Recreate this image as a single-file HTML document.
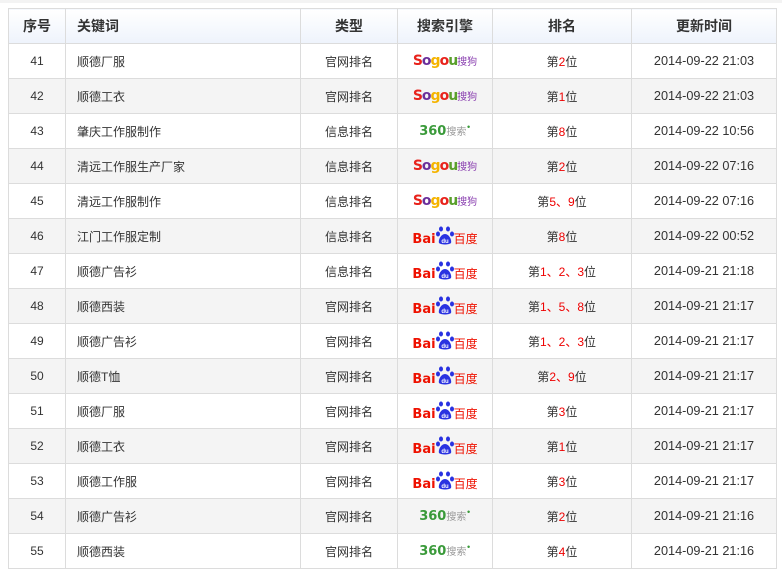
<!DOCTYPE html>
<html><head><meta charset="utf-8"><style>
body{margin:0;background:#fff;font-family:"Liberation Sans","Noto Sans CJK SC",sans-serif;font-size:12px;color:#333;overflow:hidden;width:782px;height:569px}
.top{position:absolute;left:0;top:0;width:782px;height:3px;background:#f3f3f3}
table{position:absolute;left:8px;top:8px;border-collapse:collapse;table-layout:fixed;width:768px}
td,th{border:1px solid #dcdcdc;height:34px;padding:0;text-align:center;white-space:nowrap}
th{font-size:14px;font-weight:bold;color:#333;background:linear-gradient(#fff,#eef3fc);}
tr.e td{background:#f4f4f4}
.k{text-align:left;padding-left:11px}
.t{font-size:12.7px}
.r{color:#e00}
.sg{font-weight:bold;font-size:14px;font-family:"DejaVu Sans",sans-serif;letter-spacing:-1px}
.sg small{font-size:10px;color:#8a3fb0;font-weight:normal;letter-spacing:0}
.q{font-weight:bold;font-size:13px;color:#3a9a3a;font-family:"DejaVu Sans",sans-serif;letter-spacing:0}
.q small{font-size:10px;color:#999;font-weight:normal}
.bd{font-weight:bold;font-size:13px;color:#e10;font-family:"DejaVu Sans",sans-serif;}
.bd svg{vertical-align:-2px}
.bd small{font-size:12px;font-weight:normal}
</style></head><body><div class="top"></div>
<table>
<colgroup><col style="width:57px"><col style="width:235px"><col style="width:97px"><col style="width:95px"><col style="width:139px"><col style="width:145px"></colgroup>
<tr><th>序号</th><th class="k">关键词</th><th>类型</th><th>搜索引擎</th><th>排名</th><th>更新时间</th></tr>
<tr><td>41</td><td class="k">顺德厂服</td><td>官网排名</td><td><span class="sg"><span style="color:#e8231c">S</span><span style="color:#6b2f9b">o</span><span style="color:#f5b400">g</span><span style="color:#e8231c">o</span><span style="color:#5aa02c">u</span><small>搜狗</small></span></td><td>第<span class="r">2</span>位</td><td class="t">2014-09-22 21:03</td></tr>
<tr class="e"><td>42</td><td class="k">顺德工衣</td><td>官网排名</td><td><span class="sg"><span style="color:#e8231c">S</span><span style="color:#6b2f9b">o</span><span style="color:#f5b400">g</span><span style="color:#e8231c">o</span><span style="color:#5aa02c">u</span><small>搜狗</small></span></td><td>第<span class="r">1</span>位</td><td class="t">2014-09-22 21:03</td></tr>
<tr><td>43</td><td class="k">肇庆工作服制作</td><td>信息排名</td><td><span class="q">360<small>搜索</small><sup style="font-size:7px">•</sup></span></td><td>第<span class="r">8</span>位</td><td class="t">2014-09-22 10:56</td></tr>
<tr class="e"><td>44</td><td class="k">清远工作服生产厂家</td><td>信息排名</td><td><span class="sg"><span style="color:#e8231c">S</span><span style="color:#6b2f9b">o</span><span style="color:#f5b400">g</span><span style="color:#e8231c">o</span><span style="color:#5aa02c">u</span><small>搜狗</small></span></td><td>第<span class="r">2</span>位</td><td class="t">2014-09-22 07:16</td></tr>
<tr><td>45</td><td class="k">清远工作服制作</td><td>信息排名</td><td><span class="sg"><span style="color:#e8231c">S</span><span style="color:#6b2f9b">o</span><span style="color:#f5b400">g</span><span style="color:#e8231c">o</span><span style="color:#5aa02c">u</span><small>搜狗</small></span></td><td>第<span class="r">5、9</span>位</td><td class="t">2014-09-22 07:16</td></tr>
<tr class="e"><td>46</td><td class="k">江门工作服定制</td><td>信息排名</td><td><span class="bd">Bai<svg width="18" height="19" viewBox="0 0 18 19"><g fill="#2932e1"><ellipse cx="5" cy="3" rx="2" ry="2.5"/><ellipse cx="12" cy="3" rx="2" ry="2.5"/><ellipse cx="2" cy="8" rx="2" ry="2.5"/><ellipse cx="16" cy="8" rx="2" ry="2.5"/><path d="M9 8 C5 8 2 14 3 17 C5 19 13 19 15 17 C16 14 13 8 9 8Z"/></g><text x="9" y="17" font-size="6" fill="#fff" text-anchor="middle" font-family="Liberation Sans">du</text></svg><small>百度</small></span></td><td>第<span class="r">8</span>位</td><td class="t">2014-09-22 00:52</td></tr>
<tr><td>47</td><td class="k">顺德广告衫</td><td>信息排名</td><td><span class="bd">Bai<svg width="18" height="19" viewBox="0 0 18 19"><g fill="#2932e1"><ellipse cx="5" cy="3" rx="2" ry="2.5"/><ellipse cx="12" cy="3" rx="2" ry="2.5"/><ellipse cx="2" cy="8" rx="2" ry="2.5"/><ellipse cx="16" cy="8" rx="2" ry="2.5"/><path d="M9 8 C5 8 2 14 3 17 C5 19 13 19 15 17 C16 14 13 8 9 8Z"/></g><text x="9" y="17" font-size="6" fill="#fff" text-anchor="middle" font-family="Liberation Sans">du</text></svg><small>百度</small></span></td><td>第<span class="r">1、2、3</span>位</td><td class="t">2014-09-21 21:18</td></tr>
<tr class="e"><td>48</td><td class="k">顺德西装</td><td>官网排名</td><td><span class="bd">Bai<svg width="18" height="19" viewBox="0 0 18 19"><g fill="#2932e1"><ellipse cx="5" cy="3" rx="2" ry="2.5"/><ellipse cx="12" cy="3" rx="2" ry="2.5"/><ellipse cx="2" cy="8" rx="2" ry="2.5"/><ellipse cx="16" cy="8" rx="2" ry="2.5"/><path d="M9 8 C5 8 2 14 3 17 C5 19 13 19 15 17 C16 14 13 8 9 8Z"/></g><text x="9" y="17" font-size="6" fill="#fff" text-anchor="middle" font-family="Liberation Sans">du</text></svg><small>百度</small></span></td><td>第<span class="r">1、5、8</span>位</td><td class="t">2014-09-21 21:17</td></tr>
<tr><td>49</td><td class="k">顺德广告衫</td><td>官网排名</td><td><span class="bd">Bai<svg width="18" height="19" viewBox="0 0 18 19"><g fill="#2932e1"><ellipse cx="5" cy="3" rx="2" ry="2.5"/><ellipse cx="12" cy="3" rx="2" ry="2.5"/><ellipse cx="2" cy="8" rx="2" ry="2.5"/><ellipse cx="16" cy="8" rx="2" ry="2.5"/><path d="M9 8 C5 8 2 14 3 17 C5 19 13 19 15 17 C16 14 13 8 9 8Z"/></g><text x="9" y="17" font-size="6" fill="#fff" text-anchor="middle" font-family="Liberation Sans">du</text></svg><small>百度</small></span></td><td>第<span class="r">1、2、3</span>位</td><td class="t">2014-09-21 21:17</td></tr>
<tr class="e"><td>50</td><td class="k">顺德T恤</td><td>官网排名</td><td><span class="bd">Bai<svg width="18" height="19" viewBox="0 0 18 19"><g fill="#2932e1"><ellipse cx="5" cy="3" rx="2" ry="2.5"/><ellipse cx="12" cy="3" rx="2" ry="2.5"/><ellipse cx="2" cy="8" rx="2" ry="2.5"/><ellipse cx="16" cy="8" rx="2" ry="2.5"/><path d="M9 8 C5 8 2 14 3 17 C5 19 13 19 15 17 C16 14 13 8 9 8Z"/></g><text x="9" y="17" font-size="6" fill="#fff" text-anchor="middle" font-family="Liberation Sans">du</text></svg><small>百度</small></span></td><td>第<span class="r">2、9</span>位</td><td class="t">2014-09-21 21:17</td></tr>
<tr><td>51</td><td class="k">顺德厂服</td><td>官网排名</td><td><span class="bd">Bai<svg width="18" height="19" viewBox="0 0 18 19"><g fill="#2932e1"><ellipse cx="5" cy="3" rx="2" ry="2.5"/><ellipse cx="12" cy="3" rx="2" ry="2.5"/><ellipse cx="2" cy="8" rx="2" ry="2.5"/><ellipse cx="16" cy="8" rx="2" ry="2.5"/><path d="M9 8 C5 8 2 14 3 17 C5 19 13 19 15 17 C16 14 13 8 9 8Z"/></g><text x="9" y="17" font-size="6" fill="#fff" text-anchor="middle" font-family="Liberation Sans">du</text></svg><small>百度</small></span></td><td>第<span class="r">3</span>位</td><td class="t">2014-09-21 21:17</td></tr>
<tr class="e"><td>52</td><td class="k">顺德工衣</td><td>官网排名</td><td><span class="bd">Bai<svg width="18" height="19" viewBox="0 0 18 19"><g fill="#2932e1"><ellipse cx="5" cy="3" rx="2" ry="2.5"/><ellipse cx="12" cy="3" rx="2" ry="2.5"/><ellipse cx="2" cy="8" rx="2" ry="2.5"/><ellipse cx="16" cy="8" rx="2" ry="2.5"/><path d="M9 8 C5 8 2 14 3 17 C5 19 13 19 15 17 C16 14 13 8 9 8Z"/></g><text x="9" y="17" font-size="6" fill="#fff" text-anchor="middle" font-family="Liberation Sans">du</text></svg><small>百度</small></span></td><td>第<span class="r">1</span>位</td><td class="t">2014-09-21 21:17</td></tr>
<tr><td>53</td><td class="k">顺德工作服</td><td>官网排名</td><td><span class="bd">Bai<svg width="18" height="19" viewBox="0 0 18 19"><g fill="#2932e1"><ellipse cx="5" cy="3" rx="2" ry="2.5"/><ellipse cx="12" cy="3" rx="2" ry="2.5"/><ellipse cx="2" cy="8" rx="2" ry="2.5"/><ellipse cx="16" cy="8" rx="2" ry="2.5"/><path d="M9 8 C5 8 2 14 3 17 C5 19 13 19 15 17 C16 14 13 8 9 8Z"/></g><text x="9" y="17" font-size="6" fill="#fff" text-anchor="middle" font-family="Liberation Sans">du</text></svg><small>百度</small></span></td><td>第<span class="r">3</span>位</td><td class="t">2014-09-21 21:17</td></tr>
<tr class="e"><td>54</td><td class="k">顺德广告衫</td><td>官网排名</td><td><span class="q">360<small>搜索</small><sup style="font-size:7px">•</sup></span></td><td>第<span class="r">2</span>位</td><td class="t">2014-09-21 21:16</td></tr>
<tr><td>55</td><td class="k">顺德西装</td><td>官网排名</td><td><span class="q">360<small>搜索</small><sup style="font-size:7px">•</sup></span></td><td>第<span class="r">4</span>位</td><td class="t">2014-09-21 21:16</td></tr>
</table>
</body></html>
